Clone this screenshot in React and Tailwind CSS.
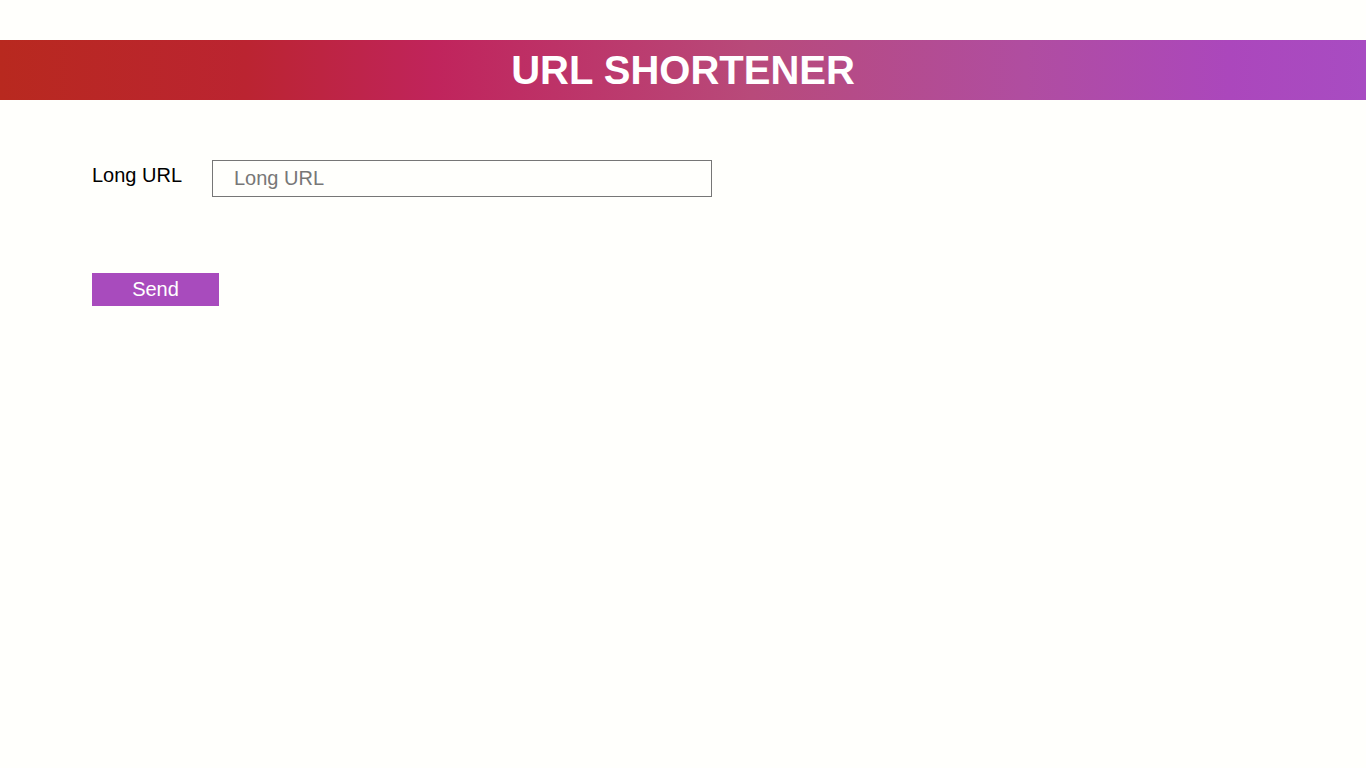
import React, { useState } from 'react';

const App = () => {
  const [url, setUrl] = useState('');

  return (
    <div className="min-h-screen w-full pt-[40px] bg-[#fffffc] font-['Liberation_Sans',Arial,sans-serif]">
      {/* Header */}
      <header className="h-[60px] flex items-center justify-center bg-[linear-gradient(to_right,#b8291f_0%,#bb2431_18%,#c0245c_32%,#b84a7a_55%,#b04da0_75%,#ab47bc_90%,#a84cc2_100%)]">
        <h1 className="text-white text-[40px] font-bold leading-none tracking-normal">URL SHORTENER</h1>
      </header>

      {/* Form */}
      <form
        onSubmit={(e) => e.preventDefault()}
        className="pl-[92px] pt-[60px]"
      >
        <div className="flex items-start">
          <label htmlFor="long-url" className="w-[120px] pt-[4px] text-[20px] leading-[23px] text-black">
            Long URL
          </label>
          <input
            id="long-url"
            type="text"
            value={url}
            onChange={(e) => setUrl(e.target.value)}
            placeholder="Long URL"
            className="w-[500px] h-[37px] border border-[#767676] bg-transparent pl-[21px] pb-[1px] text-[20px] text-black placeholder-[#777777] outline-none"
          />
        </div>

        <button
          type="submit"
          className="mt-[76px] w-[127px] h-[33px] pb-[1px] bg-[#a84bbd] text-white text-[20px] leading-none flex items-center justify-center"
        >
          Send
        </button>
      </form>
    </div>
  );
};

export default App;
